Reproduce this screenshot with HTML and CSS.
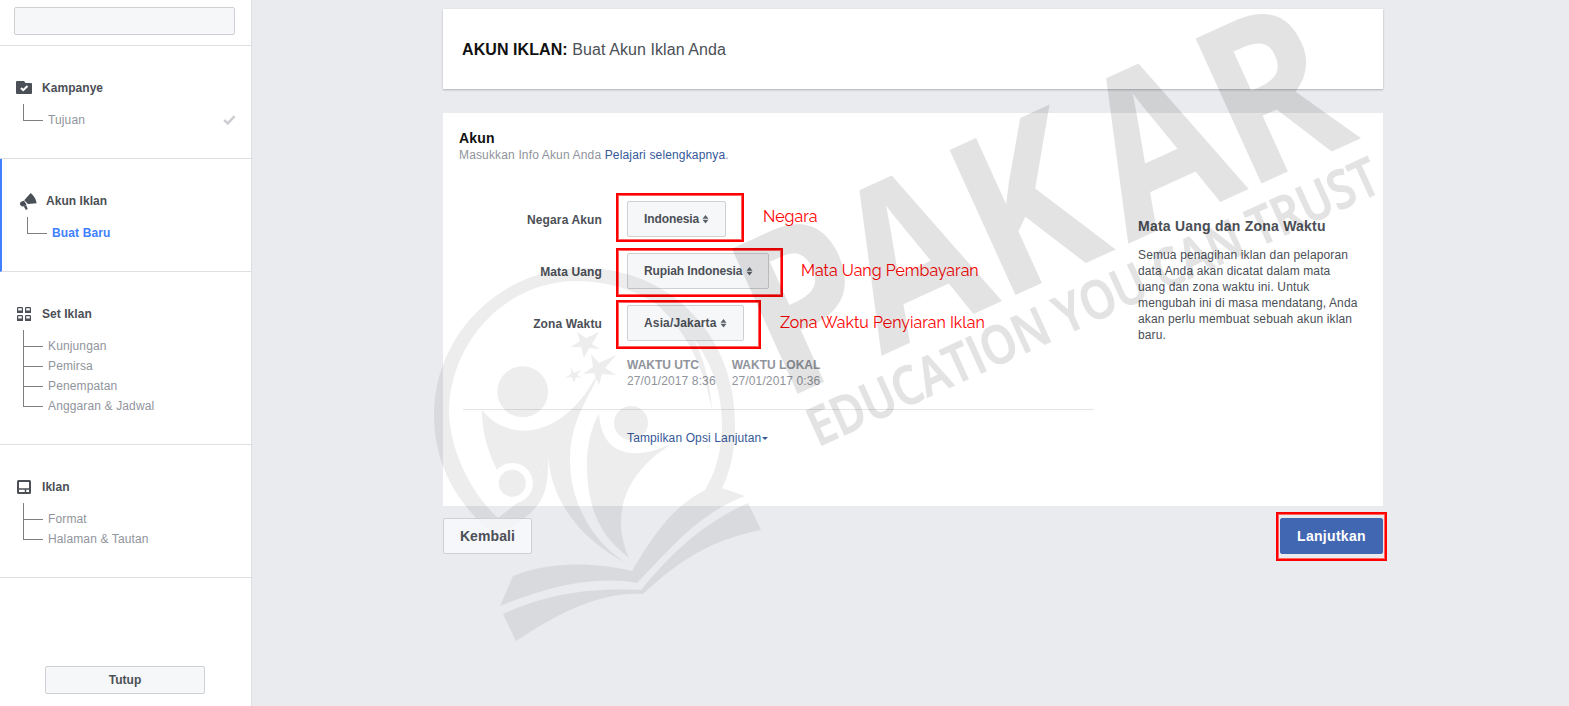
FILE: index.html
```html
<!DOCTYPE html>
<html lang="id">
<head>
    <meta charset="utf-8">
    <title>Buat Akun Iklan</title>
    <link rel="stylesheet" href="styles.css">
</head>
<body>
    <aside class="sidebar">
        <div class="account">
            <div class="account-select"></div>
        </div>

        <section class="step">
            <h3><svg class="icon icon-folder" width="16" height="13" viewBox="0 0 16 13"><path fill="#4b4f56" d="M1 0h7l1.500 2H15a1 1 0 0 1 1 1v9a1 1 0 0 1-1 1H1a1 1 0 0 1-1-1V1a1 1 0 0 1 1-1z"/><path d="M5 7l2.200 2.200L11.500 5" fill="none" stroke="#fff" stroke-width="2"/></svg>Kampanye</h3>
            <ul>
                <li>Tujuan <svg class="check" width="13" height="10" viewBox="0 0 13 10"><path d="M1.200 5l3.600 3.400L11.600 1.200" fill="none" stroke="#ccced3" stroke-width="2.600"/></svg></li>
            </ul>
        </section>

        <section class="step active">
            <h3><svg class="icon icon-horn" width="18" height="17" viewBox="0 0 18 17"><path fill="#4b4f56" d="M10.700 0Q15.500 4 16.700 10.200L8 11 4.200 7.200zM4 7.800l2.600 3.800Q4.500 13.800 2 13.500 -.8 12 .2 9.600 2 7.800 4 7.800zM3.800 13.600l2.500-1.400 1.400 3.800-1.700 1z"/></svg>Akun Iklan</h3>
            <ul>
                <li class="current">Buat Baru</li>
            </ul>
        </section>

        <section class="step">
            <h3><svg class="icon" width="16" height="14" viewBox="0 0 16 14"><g fill="none" stroke="#4b4f56" stroke-width="1.200"><rect x="1.600" y=".6" width="4.800" height="4.800" rx=".6"/><rect x="9.600" y=".6" width="4.800" height="4.800" rx=".6"/><rect x="1.600" y="8.600" width="4.800" height="4.800" rx=".6"/><rect x="9.600" y="8.600" width="4.800" height="4.800" rx=".6"/></g><path fill="#4b4f56" d="M1 3.500h6V6H1zM9 3.500h6V6H9zM1 11.500h6V14H1zM9 11.500h6V14H9z"/></svg>Set Iklan</h3>
            <ul>
                <li>Kunjungan</li>
                <li>Pemirsa</li>
                <li>Penempatan</li>
                <li>Anggaran &amp; Jadwal</li>
            </ul>
        </section>

        <section class="step">
            <h3><svg class="icon" width="16" height="14" viewBox="0 0 16 14"><rect x="2" y="1" width="12" height="12" rx=".5" fill="none" stroke="#4b4f56" stroke-width="2"/><path d="M2 9h12M9.500 9v4" stroke="#4b4f56" stroke-width="1.500"/></svg>Iklan</h3>
            <ul>
                <li>Format</li>
                <li>Halaman &amp; Tautan</li>
            </ul>
        </section>

        <button type="button" class="close">Tutup</button>
    </aside>

    <main>
        <header class="title-card"><b>AKUN IKLAN:</b> Buat Akun Iklan Anda</header>

        <div class="card">
            <h2>Akun</h2>
            <p class="intro">Masukkan Info Akun Anda <a>Pelajari selengkapnya</a>.</p>

            <div class="columns">
                <div class="form">
                    <div class="row">
                        <label>Negara Akun</label>
                        <div class="field">
                            <button type="button" class="select country">Indonesia <svg width="7" height="9" viewBox="0 0 7 9"><path fill="#5d6169" d="M3.500 0L6.500 3.700H.5zM3.500 8.500L.5 4.800h6z"/></svg></button>
                            <span class="mark mark-country"></span>
                            <span class="note note-country">Negara</span>
                        </div>
                    </div>
                    <div class="row">
                        <label>Mata Uang</label>
                        <div class="field">
                            <button type="button" class="select currency">Rupiah Indonesia <svg width="7" height="9" viewBox="0 0 7 9"><path fill="#5d6169" d="M3.500 0L6.500 3.700H.5zM3.500 8.500L.5 4.800h6z"/></svg></button>
                            <span class="mark mark-currency"></span>
                            <span class="note note-currency">Mata Uang Pembayaran</span>
                        </div>
                    </div>
                    <div class="row">
                        <label>Zona Waktu</label>
                        <div class="field">
                            <button type="button" class="select zone">Asia/Jakarta <svg width="7" height="9" viewBox="0 0 7 9"><path fill="#5d6169" d="M3.500 0L6.500 3.700H.5zM3.500 8.500L.5 4.800h6z"/></svg></button>
                            <span class="mark mark-zone"></span>
                            <span class="note note-zone">Zona Waktu Penyiaran Iklan</span>
                        </div>
                    </div>
                    <div class="times">
                        <div><b>WAKTU UTC</b><br>27/01/2017 8:36</div>
                        <div><b>WAKTU LOKAL</b><br>27/01/2017 0:36</div>
                    </div>
                    <a class="advanced">Tampilkan Opsi Lanjutan<i class="caret"></i></a>
                </div>

                <div class="help">
                    <h4>Mata Uang dan Zona Waktu</h4>
                    <p>Semua penagihan iklan dan pelaporan<br>data Anda akan dicatat dalam mata<br>uang dan zona waktu ini. Untuk<br>mengubah ini di masa mendatang, Anda<br>akan perlu membuat sebuah akun iklan<br>baru.</p>
                </div>
            </div>
        </div>

        <div class="actions">
            <button type="button" class="back">Kembali</button>
            <div class="next-wrap">
                <button type="button" class="next">Lanjutkan</button>
                <span class="mark mark-next"></span>
            </div>
        </div>
    </main>

    <!-- Watermark -->
    <svg class="watermark" width="1569" height="706" viewBox="0 0 1569 706">
        <g class="wm-logo">
            <path d="M705 490C720 465 722 440 722 423C722 345 658 281 577 281C503 281 449 345 449 412C450 450 470 492 498 518L517 503A20.500 20.500 0 0 0 533 483L548 457C549 492 542 505 522 520Q508 530 496 531Q490 531 485 527C462 505 434 470 434 415C434 335 500 268 583 268C670 268 735 335 735 423C735 450 731 470 722 488Z"/>
            <path d="M600 269C665 280 708 335 712 410C700 345 665 295 600 269Z"/>
            <circle cx="522.700" cy="391.700" r="25.400"/>
            <path d="M482 410C505 440 560 445 598 373C594 393 570 415 570 460C570 505 595 545 627 563C590 545 553 510 548 457L533 483A20.500 20.500 0 0 0 497 470C488 450 482 435 482 410Z"/>
            <circle cx="512.300" cy="483.300" r="13.500"/>
            <circle cx="631" cy="423" r="17"/>
            <path d="M599 414C602 460 640 460 675 442C630 468 608 510 629 558C600 535 587 510 587 462C587 445 592 425 599 414Z"/>
            <path d="M577 332l9 6 13-6-7 12 8 5-11-1-5 10-3-11-10 0 9-6z"/>
            <path d="M591 354l8 9 17-8-11 13 11 7-14-1-3 11-5-12-11 1 10-7z"/>
            <path d="M571 368l3 5 7-3-4 5 5 3-6-1-2 6-2-6-7 1 6-4z"/>
        </g>
        <g class="wm-book">
            <path d="M513 576C550 561 595 562 632 571C655 532 675 505 705 490L722 488L745 496C695 515 665 555 637 583C590 575 545 588 500 606Z"/>
            <path d="M503 614C550 593 590 588 641 590C670 555 700 525 748 503L761 530C710 540 680 560 643 594C600 591 555 615 516 641Z"/>
        </g>
        <text class="wm-name" transform="translate(797 394) rotate(-24.400) scale(.86 1)" x="-19 108 259 423 573" y="0">PAKAR</text>
        <text class="wm-tag" transform="translate(818 447) rotate(-24.400)" textLength="621" lengthAdjust="spacingAndGlyphs">EDUCATION YOU CAN TRUST</text>
    </svg>
</body>
</html>
```

FILE: styles.css
```css
* {
    box-sizing: border-box;
}

body {
    margin: 0;
    height: 706px;
    display: flex;
    position: relative;
    overflow: hidden;
    background-color: #e9ebee;
    font-family: "Liberation Sans", Arial, sans-serif;
    font-size: 12px;
    line-height: 16px;
    letter-spacing: 0.13px;
    color: #4b4f56;
}

h2, h3, h4, p, ul {
    margin: 0;
    padding: 0;
}

button {
    font-family: inherit;
    font-weight: bold;
    color: #4b4f56;
    background-color: #f6f7f9;
    border: 1px solid #ced0d4;
    border-radius: 2px;
    padding: 0;
}

/* Sidebar */
.sidebar {
    width: 252px;
    height: 706px;
    background-color: #fff;
    border-right: 1px solid #dddfe2;
    display: flex;
    flex-direction: column;
}

.account {
    height: 46px;
    padding: 7px 16px 0 14px;
    border-bottom: 1px solid #dddfe2;
}

.account-select {
    height: 28px;
    background-color: #f6f7f9;
    border: 1px solid #ced0d4;
    border-radius: 2px;
}

.step {
    border-bottom: 1px solid #dddfe2;
    padding: 34px 15px 28px 16px;
}

.step.active {
    border-left: 2px solid #4080ff;
    padding-left: 18px;
}

.step h3 {
    display: flex;
    align-items: center;
    font-size: 12px;
    line-height: 16px;
    height: 16px;
    letter-spacing: 0.05px;
}

.icon {
    margin-right: 10px;
    overflow: visible;
}

.icon-folder {
    margin-top: -2px;
}

.icon-horn {
    margin-right: 8px;
}

.step ul {
    list-style: none;
    margin: 9px 0 0 7px;
}

.step li {
    position: relative;
    display: flex;
    align-items: center;
    justify-content: space-between;
    height: 20px;
    padding-left: 25px;
    color: #90949c;
}

.step li:first-child {
    height: 25px;
    padding-top: 5px;
}

/* tree lines */
.step li::before {
    content: "";
    position: absolute;
    left: 0;
    bottom: 9px;
    width: 19px;
    height: 20px;
    border-left: 1px solid #7f7f7f;
    border-bottom: 1px solid #7f7f7f;
}

.step li:first-child::before {
    height: 16px;
}

.step li.current {
    color: #4080ff;
    font-weight: bold;
}

.close {
    width: 160px;
    height: 28px;
    margin: auto auto 12px 45px;
    font-size: 12px;
}

/* Main column */
main {
    width: 940px;
    margin: 9px 0 0 191px;
}

.title-card {
    height: 80px;
    padding: 0 19px;
    background-color: #fff;
    box-shadow: 0 1px 2px rgba(0, 0, 0, 0.25);
    font-size: 16px;
    line-height: 82px;
    letter-spacing: 0.08px;
}

.title-card b {
    color: #111;
}

.card {
    height: 393px;
    margin-top: 24px;
    padding: 17px 16px;
    background-color: #fff;
}

.card h2 {
    font-size: 14px;
    line-height: 17px;
    color: #111;
    letter-spacing: 0.2px;
}

.intro {
    color: #90949c;
    letter-spacing: 0.15px;
}

a {
    color: #365899;
}

.columns {
    display: flex;
    margin-top: 38px;
}

.form {
    width: 631px;
    margin-left: 4px;
}

.row {
    display: flex;
    align-items: center;
    height: 36px;
    margin-bottom: 16px;
}

.row label {
    width: 139px;
    margin-right: 25px;
    padding-top: 2px;
    text-align: right;
    font-weight: bold;
}

.field {
    position: relative;
}

.select {
    display: block;
    height: 36px;
    padding-left: 16px;
    text-align: left;
    font-size: 12px;
    letter-spacing: -0.1px;
}

.select svg {
    vertical-align: -1px;
}

.country {
    width: 99px;
}

.currency {
    width: 142px;
}

.zone {
    width: 117px;
    letter-spacing: 0.15px;
}

/* Red highlights and their notes */
.mark {
    position: absolute;
    border: 2px solid #f00;
    box-shadow: inset 0 0 0 1px #ff6464;
    height: 49px;
}

.mark-country {
    left: -11px;
    top: -8px;
    width: 128px;
}

.mark-currency {
    left: -11px;
    top: -5px;
    width: 167px;
}

.mark-zone {
    left: -11px;
    top: -5px;
    width: 145px;
}

.mark-next {
    left: -4px;
    top: -6px;
    width: 111px;
}

.note {
    position: absolute;
    font-family: Raleway, Lato, sans-serif;
    font-size: 16px;
    line-height: 20px;
    letter-spacing: 0;
    color: #f00;
    white-space: nowrap;
}

.note-country {
    left: 136px;
    top: 6px;
}

.note-currency {
    left: 174px;
    top: 8px;
}

.note-zone {
    left: 153px;
    top: 8px;
}

.times {
    display: flex;
    gap: 16px;
    height: 53px;
    padding-left: 164px;
    border-bottom: 1px solid #e5e5e5;
    color: #90949c;
}

.times b {
    letter-spacing: 0;
}

.advanced {
    display: inline-block;
    margin: 20px 0 0 164px;
}

.caret {
    display: inline-block;
    margin-left: 1px;
    border: 3px solid transparent;
    border-top-color: #365899;
    border-bottom: 0;
    vertical-align: 2px;
}

.help {
    margin: 17px 0 0 44px;
}

.help h4 {
    font-size: 14px;
    line-height: 16px;
    letter-spacing: 0.23px;
    margin-bottom: 13px;
}

.actions {
    display: flex;
    justify-content: space-between;
    margin-top: 12px;
}

.actions button {
    display: block;
    height: 36px;
    font-size: 14px;
    letter-spacing: 0.1px;
}

/* lets the watermark show through a little */
.actions .back {
    width: 89px;
    position: relative;
    z-index: 2;
    background-color: rgba(249, 250, 252, 0.8);
}

.next-wrap {
    position: relative;
}

.actions .next {
    width: 103px;
    color: #fff;
    background-color: #4267b2;
    border-color: #4267b2;
    letter-spacing: 0.3px;
}

/* Watermark */
.watermark {
    position: absolute;
    left: 0;
    top: 0;
    pointer-events: none;
    font-family: "Open Sans", "Noto Sans", sans-serif;
    letter-spacing: 0;
}

.wm-logo {
    opacity: 0.065;
}

.wm-book {
    opacity: 0.065;
}

.wm-name {
    font-size: 223px;
    font-weight: 700;
    opacity: 0.105;
}

.wm-tag {
    font-size: 53px;
    font-weight: 600;
    stroke: #000;
    stroke-width: 1.2px;
    opacity: 0.105;
}
```
